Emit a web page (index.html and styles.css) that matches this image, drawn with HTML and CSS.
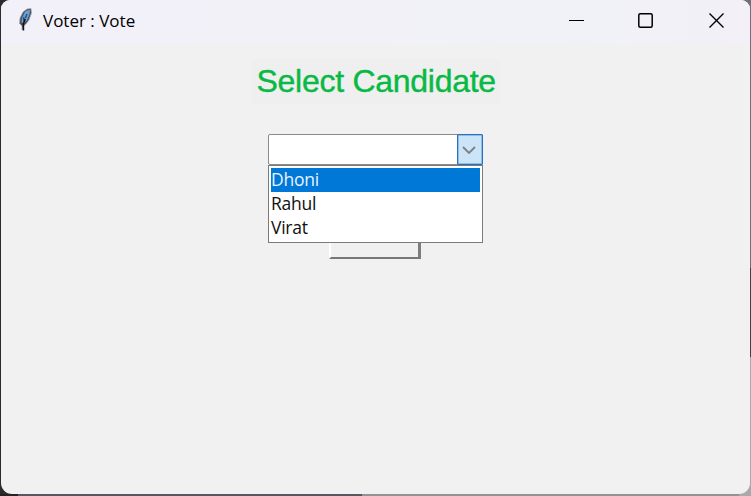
FILE: index.html
```html
<!DOCTYPE html>
<html lang="en">
<head>
<meta charset="utf-8">
<title>Voter : Vote</title>
<link rel="stylesheet" href="styles.css">
</head>
<body>
<div class="window">
  <header class="titlebar">
    <svg class="feather" width="16" height="24" viewBox="0 0 16 24">
      <path d="M5 22V18L2.5 15.5 3 10 6 4 10 1 14 .5 14.5 5 12 12 9 16 6.5 18Z" fill="#4f5359" stroke="#a5a6ab" stroke-width=".7"/>
      <path d="M10 2.5 13 2 12.5 6 10 12 6.5 16 4.5 14 5.5 9 8 4Z" fill="#6aa1dc"/>
      <path d="M10 6 8.5 10M6.8 9V13" fill="none" stroke="#1d4d86" stroke-width="1.4"/>
      <path d="M8.2 11 6.4 16V22.5" fill="none" stroke="#101216" stroke-width="1.6"/>
    </svg>
    <h1 class="title">Voter : Vote</h1>
    <div class="controls">
      <svg width="16" height="16" viewBox="0 0 16 16"><path d="M0 7.5H15" stroke="#000"/></svg>
      <svg width="16" height="16" viewBox="0 0 16 16"><rect x=".8" y=".8" width="13.4" height="13.4" rx="1.5" fill="none" stroke="#000" stroke-width="1.5"/></svg>
      <svg class="close" width="16" height="16" viewBox="0 0 16 16"><path d="M.5.5 14.5 14.5M14.5.5.5 14.5" stroke="#000" stroke-width="1.4"/></svg>
    </div>
  </header>
  <main class="content">
    <h2 class="heading">Select Candidate</h2>
    <div class="combo">
      <div class="field">
        <div class="arrow"><svg width="14" height="8" viewBox="0 0 14 8"><path d="M1 1 7 7 13 1" fill="none" stroke="#7b8188" stroke-width="1.8"/></svg></div>
      </div>
      <ul class="options">
        <li class="option selected">Dhoni</li>
        <li class="option">Rahul</li>
        <li class="option">Virat</li>
      </ul>
    </div>
    <div class="button"></div>
  </main>
</div>
</body>
</html>
```
FILE: styles.css
```css
* { box-sizing: border-box; }
body {
  margin: 0;
  height: 496px;
  padding: 0 1px 2px;
  overflow: hidden;
  background:
    linear-gradient(90deg, #242326 18px, #55585e 18px 362px, #949292 362px) 0 494px / 751px 2px no-repeat,
    linear-gradient(#6c717b 268px, #3f4042 268px 357px, #a9a9a9 357px) 750px 0 / 1px 496px no-repeat,
    #2b2a2d;
}
body::before,
body::after {
  content: "";
  position: absolute;
  z-index: -1;
  right: 0;
  width: 12px;
  height: 12px;
}
body::before { top: 0; background: #6c717b; }
body::after { bottom: 0; background: #aaa; }
.window {
  height: 494px;
  border-radius: 9px 9px 11px 11px;
  overflow: hidden;
  background: #f1f1f1;
}
.titlebar {
  display: flex;
  align-items: center;
  height: 44px;
  padding: 0 25px 3px 16px;
  background: linear-gradient(90deg, #f2f0f8, #f2f1f8 50%, #f0f2f8 72%, #f3f0f7);
}
.feather { margin-top: -2px; }
.title {
  margin: 0 0 0 10px;
  font: 400 17px/24px "Open Sans", "Noto Sans", sans-serif;
  color: #000;
  white-space: nowrap;
}
.controls {
  display: flex;
  gap: 53px;
  margin-left: auto;
}
.close { margin-left: 2px; }
.content {
  display: flex;
  flex-direction: column;
  align-items: center;
  padding-top: 15px;
}
.heading {
  width: 248px;
  height: 45px;
  margin: 0 0 30px;
  padding-left: 5px;
  font: 400 32px/45px "Liberation Sans", Arial, sans-serif;
  letter-spacing: -0.27px;
  white-space: nowrap;
  color: #08b944;
  -webkit-text-stroke: 0.4px #08b944;
  background: #efefef;
}
.combo { width: 215px; }
.field {
  display: flex;
  justify-content: flex-end;
  height: 31px;
  border: 1px solid #8a8a8a;
  border-radius: 2px;
  background: #fff;
}
.arrow {
  display: flex;
  align-items: center;
  justify-content: center;
  width: 26px;
  height: 31px;
  margin: -1px -1px 0 0;
  padding-right: 2px;
  border: 1px solid #2872bd;
  border-radius: 1px;
  box-shadow: inset 0 0 0 0.5px #5a98d2;
  background: #cce4f7;
}
.options {
  height: 78px;
  margin: 0;
  padding: 2px;
  list-style: none;
  border: 1px solid #7b7b7b;
  background: #fff;
}
.option {
  height: 24px;
  font: 400 17.5px/22px "Open Sans", "Noto Sans", sans-serif;
  letter-spacing: -0.25px;
  color: #111;
}
.selected {
  color: #e8f2ff;
  background: #0078d7;
}
.button {
  width: 92px;
  height: 16px;
  margin-right: 2px;
  border: solid;
  border-width: 0 3px 2px 2px;
  border-color: transparent #7d7d7d #777 #fff;
  background: #f0f0f0;
}
```
